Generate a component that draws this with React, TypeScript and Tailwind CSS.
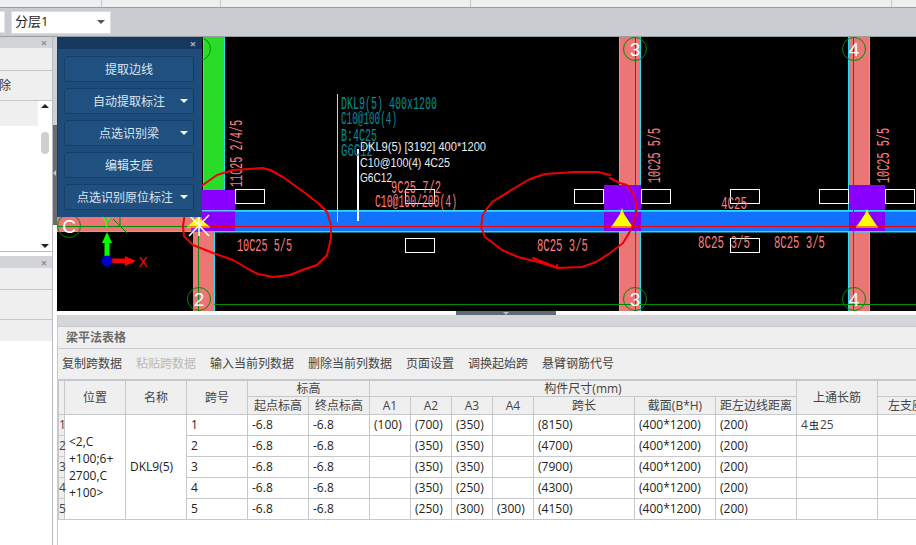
import React from "react";

const PINK = "#ec7575";
const CYAN = "#25e0ee";
const GREEN = "#008a00";
const RED = "#f00000";
const PURPLE = "#8a00ff";
const BLUE = "#1272ff";
const SALMON = "#f87e7e";
const TEAL = "#008c98";

function Cad({ x, y, w, h = 13, text, color = SALMON, rot = false }: { x: number; y: number; w: number; h?: number; text: string; color?: string; rot?: boolean }) {
  return (
    <text
      x={x}
      y={y}
      fill={color}
      fontSize={h * 1.45}
      textLength={w}
      lengthAdjust="spacingAndGlyphs"
      transform={rot ? `rotate(-90 ${x} ${y})` : undefined}
      className="font-['Liberation_Mono',monospace]"
    >
      {text}
    </text>
  );
}

function Axis({ cx, cy, label }: { cx: number; cy: number; label: string }) {
  return (
    <g>
      <circle cx={cx} cy={cy} r={11.5} fill="none" stroke={GREEN} strokeWidth={1} />
      <text x={cx} y={cy + 7} fill="#fff" fontSize={19} textAnchor="middle" className="font-['Liberation_Sans',sans-serif]">
        {label}
      </text>
    </g>
  );
}

function CadCanvas() {
  const rects: [number, number][] = [
    [235, 189], [405, 189], [574, 189], [641, 189], [730, 189], [819, 189], [885, 189], [405, 238], [730, 238],
  ];
  return (
    <svg viewBox="57 37 859 274" width={859} height={274} className="block">
      <rect x={57} y={37} width={859} height={274} fill="#000" />
      {/* left column, top part */}
      <rect x={203} y={37} width={21} height={153} fill="#28dc28" />
      <line x1={203.5} y1={37} x2={203.5} y2={190} stroke={CYAN} />
      <line x1={224.5} y1={37} x2={224.5} y2={190} stroke={CYAN} />
      {/* C band */}
      <rect x={57} y={217} width={145} height={14} fill={PINK} />
      <line x1={57} y1={231.5} x2={193} y2={231.5} stroke={CYAN} />
      {/* column 2 lower */}
      <rect x={193} y={231} width={21} height={80} fill={PINK} />
      <rect x={191} y={227} width={11} height={5} fill="#7a30f0" />
      <line x1={214.5} y1={231} x2={214.5} y2={311} stroke={CYAN} />
      {/* columns 3, 4 */}
      <rect x={620} y={37} width={21} height={274} fill={PINK} />
      <rect x={848} y={37} width={22} height={274} fill={PINK} />
      {[619.5, 640.5, 848.5, 869.5].map((x) => (
        <line key={x} x1={x} y1={37} x2={x} y2={311} stroke={CYAN} />
      ))}
      {/* beam */}
      <rect x={235} y={211} width={681} height={20} fill={BLUE} />
      {/* support blocks */}
      <rect x={202} y={190} width={33} height={41} fill={PURPLE} />
      <rect x={604} y={185} width={37} height={46} fill={PURPLE} />
      <rect x={849} y={185} width={36} height={46} fill={PURPLE} />
      <rect x={202} y={210} width={714} height={1.5} fill="#58c8f0" />
      <rect x={235} y={210} width={681} height={1.5} fill={CYAN} />
      <rect x={214} y={231} width={702} height={1.5} fill={CYAN} />
      {/* grid lines */}
      <line x1={57} y1={226.5} x2={190} y2={226.5} stroke={GREEN} />
      <line x1={198.5} y1={226} x2={198.5} y2={311} stroke={GREEN} />
      <line x1={635.5} y1={231} x2={635.5} y2={311} stroke={GREEN} />
      <line x1={853.5} y1={231} x2={853.5} y2={311} stroke={GREEN} />
      <line x1={214} y1={304.5} x2={916} y2={304.5} stroke={GREEN} />
      <line x1={113} y1={219} x2={127} y2={233} stroke={GREEN} />
      <line x1={120} y1={217} x2={120} y2={227} stroke={GREEN} />
      {/* red axes */}
      <line x1={635.5} y1={37} x2={635.5} y2={226} stroke={RED} />
      <line x1={853.5} y1={37} x2={853.5} y2={226} stroke={RED} />
      <line x1={190} y1={226.5} x2={916} y2={226.5} stroke={RED} strokeWidth={1.2} />
      {/* triangles */}
      <polygon points="188,226 198,217 209,226" fill="#ffff00" />
      <polygon points="612,226 620,214 622,208 624,214 632,226" fill="#ffff00" />
      <polygon points="857,226 865,214 867,209 869,214 877,226" fill="#ffff00" />
      <line x1={611} y1={227} x2={633} y2={227} stroke="#ffff00" />
      <line x1={856} y1={227} x2={878} y2={227} stroke="#ffff00" />
      <line x1={187} y1={227} x2={210} y2={227} stroke="#ffff00" />
      {/* white star */}
      <g stroke="#fff" strokeWidth={1.5}>
        <line x1={189} y1={236} x2={209} y2={215} />
        <line x1={209} y1={236} x2={189} y2={215} />
        <line x1={199} y1={214} x2={199} y2={236} />
      </g>
      {/* white boxes */}
      {rects.map(([x, y]) => (
        <rect key={`${x}-${y}`} x={x + 0.5} y={y + 0.5} width={29} height={14} fill="none" stroke="#fff" />
      ))}
      {/* leader lines */}
      <line x1={337.5} y1={94} x2={337.5} y2={222} stroke="#e8e800" />
      <line x1={358} y1={149} x2={358} y2={221} stroke="#fff" strokeWidth={2} />
      {/* grid bubbles */}
      <Axis cx={69} cy={226} label="C" />
      <Axis cx={199} cy={49} label="" />
      <Axis cx={635} cy={49} label="3" />
      <Axis cx={854} cy={49} label="4" />
      <Axis cx={199} cy={299} label="2" />
      <Axis cx={635} cy={299} label="3" />
      <Axis cx={854} cy={299} label="4" />
      {/* coordinate gizmo */}
      <rect x={104.5} y={242} width={5} height={16} fill="#00ff00" />
      <polygon points="107,232 112,243 102,243" fill="#00ff00" />
      <rect x={112} y={258.5} width={14} height={4.5} fill="#ff0000" />
      <polygon points="125,256 136,261 125,266" fill="#ff0000" />
      <circle cx={107} cy={261} r={5.5} fill="#0000c8" />
      <text x={143} y={267} fill="#ff0000" fontSize={15} textAnchor="middle" className="font-['Liberation_Mono',monospace]">X</text>
      <text x={107} y={227} fill="#00ff00" fontSize={15} textAnchor="middle" className="font-['Liberation_Mono',monospace]">Y</text>
      {/* teal annotation */}
      <Cad x={341} y={109} w={96} text="DKL9(5) 400x1200" color={TEAL} />
      <Cad x={341} y={124} w={56} text="C10@100(4)" color={TEAL} />
      <Cad x={341} y={141} w={36} text="B:4C25" color={TEAL} />
      <Cad x={341} y={156} w={32} text="G6C12" color={TEAL} />
      {/* salmon annotation */}
      <Cad x={391} y={193} w={50} text="9C25 7/2" />
      <Cad x={375} y={207} w={82} text="C10@100/200(4)" />
      <Cad x={237} y={251} w={55} text="10C25 5/5" />
      <Cad x={537} y={251} w={51} text="8C25 3/5" />
      <Cad x={721} y={209} w={26} text="4C25" />
      <Cad x={698} y={248} w={52} text="8C25 3/5" />
      <Cad x={774} y={248} w={51} text="8C25 3/5" />
      <Cad x={242} y={187} w={67} text="11C25 2/4/5" rot />
      <Cad x={660} y={183} w={55} text="10C25 5/5" rot />
      <Cad x={889} y={183} w={55} text="10C25 5/5" rot />
      {/* white tooltip text */}
      <g fill="#ececec" fontSize={12} className="font-['Liberation_Sans',sans-serif]">
        <text x={360} y={151} textLength={126} lengthAdjust="spacingAndGlyphs">DKL9(5) [3192] 400*1200</text>
        <text x={360} y={167} textLength={90} lengthAdjust="spacingAndGlyphs">C10@100(4) 4C25</text>
        <text x={360} y={182} textLength={32} lengthAdjust="spacingAndGlyphs">G6C12</text>
      </g>
      {/* freehand marks */}
      <g fill="none" stroke="#f00000" strokeWidth={2} strokeLinejoin="round" strokeLinecap="round">
        <path d="M233 170 L263 168 L270 170 L283 177 L305 193 L318 203 L327 212 L331 225 L331 238 L327 255 L317 265 L305 269 L290 275 L273 277 L258 274 L250 270 L233 260 L213 253 L193 245 L184 236 L183 226 L185 213 L192 199 L200 187 L217 175 L233 170" />
        <path d="M610 175 L598 172 L575 172 L545 174 L530 179 L523 183 L492 202 L483 214 L481 227 L485 237 L502 250 L518 257 L538 262 L558 268 L582 267 L596 262 L610 253 L623 243 L632 228 L636 214 L637 204 L633 193 L627 185 L620 183 L610 178" />
        <path d="M533 258 L558 268 M558 268 L557 265" />
      </g>
    </svg>
  );
}

function PanelButton({ label, arrow = false, extra = "" }: { label: string; arrow?: boolean; extra?: string }) {
  return (
    <div className={`relative flex h-[26px] w-[130px] items-center justify-center rounded-[3px] border border-[#173e66] bg-[#20507f] pt-[1px] text-[12px] text-[#dbe6f0] ${extra}`}>
      {label}
      {arrow && <span className="absolute right-[5px] top-[10px] h-0 w-0 border-x-[4px] border-t-[4px] border-x-transparent border-t-white" />}
    </div>
  );
}

function Close({ color = "text-[#8a8d92]" }: { color?: string }) {
  return <span className={`text-[11px] font-bold leading-none ${color}`}>×</span>;
}

function Sidebar() {
  return (
    <div className="flex w-[53px] shrink-0 flex-col border-r border-[#b9bcc1] bg-white">
      <div className="flex h-[11px] items-center justify-end bg-[#d2d4d8] pr-[5px]"><Close /></div>
      <div className="h-[23px] border-b border-[#c6c8cc] bg-[#efefef]" />
      <div className="flex h-[30px] items-center border-b border-[#c6c8cc] bg-[#efefef] text-[12px] text-[#333]">
        <span className="ml-[-1px]">除</span>
      </div>
      <div className="flex h-[151px] border-b border-[#b9bcc1]">
        <div className="h-[25px] w-[38px] bg-[#efefef]" />
        <div className="flex w-[14px] flex-col items-center pt-[3px]">
          <span className="h-0 w-0 border-x-[4px] border-b-[4px] border-x-transparent border-b-[#222]" />
          <span className="mt-[24px] h-[22px] w-[8px] rounded-[4px] bg-[#cfcfcf]" />
          <span className="mt-auto mb-[3px] h-0 w-0 border-x-[4px] border-t-[4px] border-x-transparent border-t-[#222]" />
        </div>
      </div>
      <div className="h-[4px]" />
      <div className="flex h-[12px] items-center justify-end bg-[#d2d4d8] pr-[5px]"><Close /></div>
      <div className="h-[22px] border-b border-[#c6c8cc] bg-[#efefef]" />
      <div className="h-[30px] border-b border-[#c6c8cc] bg-[#efefef]" />
      <div className="h-[21px] bg-[#efefef]" />
    </div>
  );
}

function Splitter() {
  return (
    <div className="flex w-[4px] shrink-0 flex-col bg-white">
      <div className="h-[88px] bg-[#cfd1d5]" />
      <div className="relative h-[100px] bg-[#6b6b6b]">
        <span className="absolute left-[0px] top-[45px] h-0 w-0 border-y-[3px] border-r-[3px] border-y-transparent border-r-[#c8c8c8]" />
      </div>
      <div className="flex-1 bg-[#ffffff]" />
    </div>
  );
}

const cols = [6, 61, 61, 61, 61, 61, 41, 41, 41, 41, 101, 81, 81, 81, 81];
const rows = [
  ["1", "(100)", "(700)", "(350)", "", "(8150)"],
  ["2", "", "(350)", "(350)", "", "(4700)"],
  ["3", "", "(350)", "(350)", "", "(7900)"],
  ["4", "", "(350)", "(250)", "", "(4300)"],
  ["5", "", "(250)", "(300)", "(300)", "(4150)"],
];
const th = "border border-[#c6c8cc] bg-[#efefef] p-0 text-center align-middle text-[12px] font-normal leading-none text-[#444] whitespace-nowrap overflow-hidden";
const td = "h-[21px] border border-[#c6c8cc] bg-white p-0 pl-[4px] text-left align-middle text-[12px] leading-none text-[#222] whitespace-nowrap";
const tdPos = "border border-[#c6c8cc] bg-white p-0 pl-[4px] text-left align-middle text-[12px] leading-[17px] text-[#222] whitespace-nowrap";

function BeamTable() {
  return (
    <div className="flex-1 overflow-hidden bg-white">
      <table className="w-[900px] table-fixed border-collapse">
        <colgroup>
          {cols.map((w, i) => (
            <col key={i} style={{ width: w }} />
          ))}
        </colgroup>
        <thead>
          <tr className="h-[16px]">
            <th rowSpan={2} className={th} />
            <th rowSpan={2} className={th}>位置</th>
            <th rowSpan={2} className={th}>名称</th>
            <th rowSpan={2} className={th}>跨号</th>
            <th colSpan={2} className={th}>标高</th>
            <th colSpan={7} className={th}>构件尺寸(mm)</th>
            <th rowSpan={2} className={th}>上通长筋</th>
            <th className={th} />
          </tr>
          <tr className="h-[18px]">
            <th className={th}>起点标高</th>
            <th className={th}>终点标高</th>
            <th className={th}>A1</th>
            <th className={th}>A2</th>
            <th className={th}>A3</th>
            <th className={th}>A4</th>
            <th className={th}>跨长</th>
            <th className={th}>截面(B*H)</th>
            <th className={th}>距左边线距离</th>
            <th className={th}>左支座钢筋</th>
          </tr>
        </thead>
        <tbody>
          {rows.map((r, i) => (
            <tr key={r[0]} className="h-[21px]">
              <td className="h-[21px] border border-[#c6c8cc] bg-[#efefef] p-0 text-left text-[12px] leading-none text-[#444]">{r[0]}</td>
              {i === 0 && (
                <>
                  <td rowSpan={5} className={tdPos}>
                    &lt;2,C<br />+100;6+<br />2700,C<br />+100&gt;
                  </td>
                  <td rowSpan={5} className={td}>DKL9(5)</td>
                </>
              )}
              <td className={td}>{r[0]}</td>
              <td className={td}>-6.8</td>
              <td className={td}>-6.8</td>
              <td className={td}>{r[1]}</td>
              <td className={td}>{r[2]}</td>
              <td className={td}>{r[3]}</td>
              <td className={td}>{r[4]}</td>
              <td className={td}>{r[5]}</td>
              <td className={td}>(400*1200)</td>
              <td className={td}>(200)</td>
              <td className={td}>
                {i === 0 && (
                  <span className="text-[#444]">
                    4<span className="mx-[1px] text-[10px] text-[#111]">虫</span>25
                  </span>
                )}
              </td>
              <td className={td} />
            </tr>
          ))}
        </tbody>
      </table>
    </div>
  );
}

export default function App() {
  const tools = [
    ["复制跨数据", false],
    ["粘贴跨数据", true],
    ["输入当前列数据", false],
    ["删除当前列数据", false],
    ["页面设置", false],
    ["调换起始跨", false],
    ["悬臂钢筋代号", false],
  ] as const;
  return (
    <div className="flex h-[545px] w-[916px] flex-col overflow-hidden bg-white font-['Open_Sans','Noto_Sans_CJK_SC',sans-serif]">
      {/* ribbon stub */}
      <div className="flex h-[8px] shrink-0 border-b border-[#9a9da1] bg-[#eceeef]">
        <div className="w-[102px] border-r border-[#c6c8cc]" />
        <div className="w-[119px] border-r border-[#c6c8cc]" />
        <div className="w-[250px] border-r border-[#c6c8cc]" />
        <div className="w-[421px] border-r border-[#c6c8cc]" />
      </div>
      {/* layer selector row */}
      <div className="flex h-[29px] shrink-0 items-center gap-[6px] border-b border-[#9a9da1] bg-[#c9ccd1]">
        <div className="h-[22px] w-[5px] border-y border-r border-[#e2e2e2] bg-white" />
        <div className="flex h-[23px] w-[100px] items-center justify-between border border-[#dedede] bg-white pl-[3px] pr-[5px] text-[13px] text-[#222]">
          <span>分层1</span>
          <span className="h-0 w-0 border-x-[4px] border-t-[4px] border-x-transparent border-t-[#555]" />
        </div>
      </div>
      <div className="flex min-h-0 flex-1">
        <Sidebar />
        <Splitter />
        <div className="flex min-w-0 flex-1 flex-col">
          {/* CAD viewport */}
          <div className="relative h-[274px] shrink-0 overflow-hidden">
            <CadCanvas />
            <div className="absolute left-0 top-0 flex h-[180px] w-[145px] flex-col border-l border-[#173e66] bg-[#1e4d7b]">
              <div className="flex h-[12px] shrink-0 items-center justify-end bg-[#17395f] pr-[6px]">
                <Close color="text-[#9db8d2]" />
              </div>
              <div className="flex flex-col gap-[6px] pl-[6px] pt-[7px]">
                <PanelButton label="提取边线" />
                <PanelButton label="自动提取标注" arrow />
                <PanelButton label="点选识别梁" arrow />
                <PanelButton label="编辑支座" />
                <PanelButton label="点选识别原位标注" arrow extra="pr-[8px]" />
              </div>
            </div>
          </div>
          {/* horizontal splitter */}
          <div className="h-[4px] shrink-0 bg-white pl-[399px]">
            <div className="relative h-full w-[100px] bg-[#5f6b77]">
              <span className="absolute left-[47px] top-[1px] h-0 w-0 border-x-[3px] border-t-[3px] border-x-transparent border-t-[#b8bec4]" />
            </div>
          </div>
          {/* beam table panel */}
          <div className="flex min-h-0 flex-1 flex-col border-l border-[#c6c8cc]">
            <div className="h-[12px] shrink-0 border-b border-[#c6c8cc] bg-[#d4d6da]" />
            <div className="flex h-[22px] shrink-0 items-center border-b border-[#c6c8cc] bg-[#efefef] pl-[8px] text-[12px] font-bold text-[#6a6a6a]">
              梁平法表格
            </div>
            <div className="flex h-[31px] shrink-0 items-center gap-[14px] border-b border-[#c6c8cc] bg-[#efefef] pl-[4px] text-[12px]">
              {tools.map(([t, off]) => (
                <span key={t} className={off ? "text-[#b9b9b9]" : "text-[#444]"}>{t}</span>
              ))}
            </div>
            <BeamTable />
          </div>
        </div>
      </div>
    </div>
  );
}
